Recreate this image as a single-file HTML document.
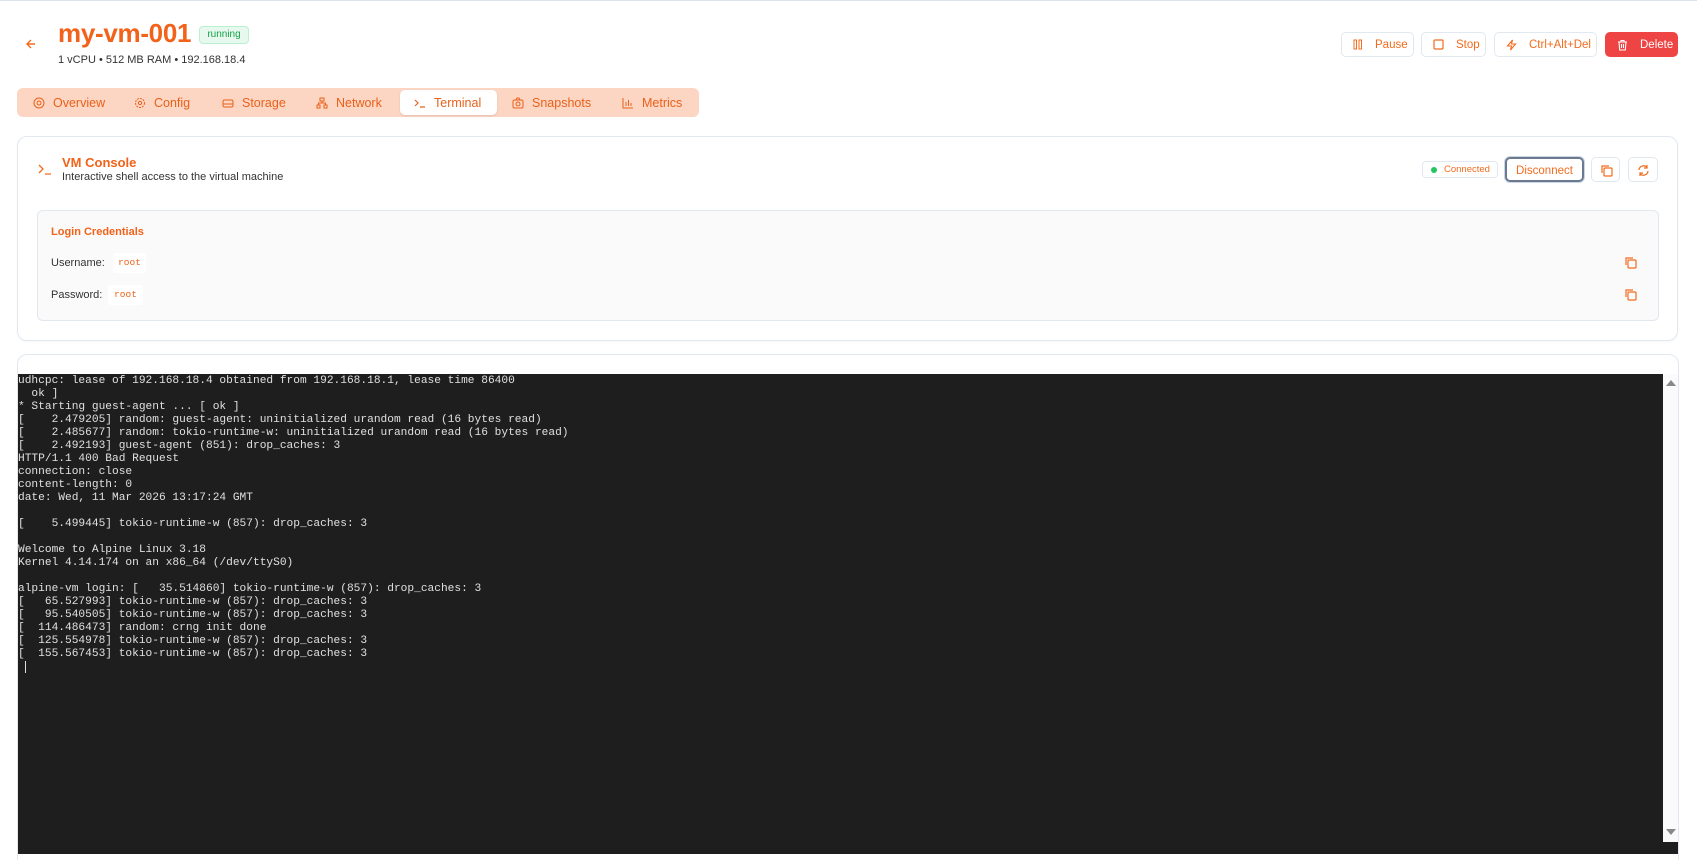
<!DOCTYPE html>
<html style="width:1697px;height:860px;overflow:hidden"><head><meta charset="utf-8"><style>
*{box-sizing:border-box;margin:0;padding:0}
body{width:1697px;height:860px;background:#fff;font-family:"Liberation Sans",sans-serif;position:relative;overflow:hidden;color:#333}
.a{position:absolute}
.btn{position:absolute;height:25px;border:1px solid #e2e8f0;border-radius:5px;background:#fff;color:#f26b1d;font-size:11.5px;display:flex;align-items:center;gap:12px;padding-left:11px}
.tab{position:absolute;top:88px;height:29px;display:flex;align-items:center;gap:8px;color:#e8611a;font-size:12.5px}
svg{display:block}
.term{position:absolute;left:18px;top:374px;width:1645px;height:468px;background:#1e1e1e;color:#e0e0e0;font-family:"Liberation Mono",monospace;font-size:11.2px;line-height:13px;white-space:pre;padding-top:1px}
</style></head><body>
<div class="a" style="left:0;top:0;width:1697px;height:1px;background:#dde3ee"></div>
<svg class="a" style="left:25px;top:38px" width="12" height="12" viewBox="0 0 12 12" fill="none" stroke="#f26b1d" stroke-width="1.4"><path d="M10 6H2M6 2L2 6l4 4"/></svg>
<div class="a" style="left:58px;top:18px;font-size:26px;font-weight:bold;color:#f2621a;letter-spacing:-0.3px">my-vm-001</div>
<div class="a" style="left:199px;top:26px;width:50px;height:18px;border:1px solid #bbf0cf;background:#e7f9ee;border-radius:4px;color:#16a34a;font-size:10px;text-align:center;line-height:16px">running</div>
<div class="a" style="left:58px;top:54px;font-size:11px;color:#333">1 vCPU • 512 MB RAM • 192.168.18.4</div>

<div class="btn" style="left:1341px;top:32px;width:73px"><svg width="10" height="11"><rect x="1" y="1" width="2.5" height="9" fill="none" stroke="#f26b1d"/><rect x="6" y="1" width="2.5" height="9" fill="none" stroke="#f26b1d"/></svg>Pause</div>
<div class="btn" style="left:1421px;top:32px;width:65px"><svg width="11" height="11"><rect x="1" y="1" width="9" height="9" rx="1" fill="none" stroke="#f26b1d" stroke-width="1.2"/></svg>Stop</div>
<div class="btn" style="left:1494px;top:32px;width:103px"><svg width="11" height="12" viewBox="0 0 11 12"><path d="M6.5 1L1.5 7h4l-1 4 5-6h-4z" fill="none" stroke="#f26b1d" stroke-width="1.1"/></svg>Ctrl+Alt+Del</div>
<div class="btn" style="left:1605px;top:32px;width:73px;background:#ef4444;border-color:#ef4444;color:#fff"><svg width="11" height="12" viewBox="0 0 11 12" fill="none" stroke="#fff" stroke-width="1.1"><path d="M1 3h9M4 3V1.5h3V3M2 3l.7 8h5.6L9 3M4.5 5v4M6.5 5v4"/></svg>Delete</div>

<div class="a" style="left:17px;top:88px;width:682px;height:29px;background:#fdd5c3;border-radius:6px"></div>
<div class="a" style="left:400px;top:90px;width:97px;height:25px;background:#fff;border-radius:5px;box-shadow:0 1px 2px rgba(0,0,0,.1)"></div>
<div class="tab" style="left:33px"><svg width="12" height="12"><circle cx="6" cy="6" r="5" fill="none" stroke="#e8611a"/><circle cx="6" cy="6" r="2" fill="none" stroke="#e8611a"/></svg>Overview</div>
<div class="tab" style="left:134px"><svg width="12" height="12"><circle cx="6" cy="6" r="4.5" fill="none" stroke="#e8611a" stroke-dasharray="2 1"/><circle cx="6" cy="6" r="1.6" fill="none" stroke="#e8611a"/></svg>Config</div>
<div class="tab" style="left:222px"><svg width="12" height="12"><rect x="1" y="3" width="10" height="7" rx="1.5" fill="none" stroke="#e8611a"/><path d="M1 7h10" stroke="#e8611a"/></svg>Storage</div>
<div class="tab" style="left:316px"><svg width="12" height="12" fill="none" stroke="#e8611a"><rect x="4" y="1" width="4" height="3"/><rect x="1" y="8" width="3" height="3"/><rect x="8" y="8" width="3" height="3"/><path d="M6 4v2M2.5 8V6h7v2"/></svg>Network</div>
<div class="tab" style="left:414px"><svg width="12" height="12" fill="none" stroke="#e8611a" stroke-width="1.2"><path d="M1 3l3 3-3 3M6 10h5"/></svg>Terminal</div>
<div class="tab" style="left:512px"><svg width="12" height="12" fill="none" stroke="#e8611a"><rect x="1" y="3" width="10" height="8" rx="1.5"/><circle cx="6" cy="7" r="2"/><path d="M4 3l1-2h2l1 2"/></svg>Snapshots</div>
<div class="tab" style="left:622px"><svg width="12" height="12" fill="none" stroke="#e8611a"><path d="M1 1v10h10M4 9V5M6.5 9V3M9 9V6"/></svg>Metrics</div>

<div class="a" style="left:17px;top:136px;width:1661px;height:205px;border:1px solid #e2e8f0;border-radius:10px;box-shadow:0 1px 2px rgba(0,0,0,.04)"></div>
<svg class="a" style="left:38px;top:162px" width="14" height="14" fill="none" stroke="#f26b1d" stroke-width="1.3"><path d="M1 3l4 4-4 4M7 12h6"/></svg>
<div class="a" style="left:62px;top:155px;font-size:13px;font-weight:bold;color:#f2621a">VM Console</div>
<div class="a" style="left:62px;top:171px;font-size:11px;color:#333">Interactive shell access to the virtual machine</div>
<div class="a" style="left:1422px;top:161px;width:76px;height:17px;border:1px solid #e2e8f0;border-radius:4px;font-size:9.5px;color:#f26b1d;line-height:15px;padding-left:21px"><span class="a" style="left:8px;top:5px;width:6px;height:6px;border-radius:50%;background:#22c55e"></span>Connected</div>
<div class="a" style="left:1505px;top:157px;width:79px;height:25px;border:2px solid #6b7a90;border-radius:5px;font-size:11.5px;color:#f26b1d;display:flex;align-items:center;justify-content:center;padding-top:2px;box-shadow:0 0 0 1px #cbd5e1">Disconnect</div>
<div class="a" style="left:1591px;top:157px;width:29px;height:25px;border:1px solid #e2e8f0;border-radius:5px"><svg style="margin:6px 8px" width="13" height="13" fill="none" stroke="#f26b1d" stroke-width="1.2"><rect x="4" y="4" width="8" height="8" rx="1"/><path d="M2 9V2h7"/></svg></div>
<div class="a" style="left:1628px;top:157px;width:30px;height:25px;border:1px solid #e2e8f0;border-radius:5px"><svg style="margin:6px 8px" width="13" height="13" viewBox="0 0 13 13" fill="none" stroke="#f26b1d" stroke-width="1.2"><path d="M2 6a4.5 4.5 0 0 1 8-2.5M11 7a4.5 4.5 0 0 1-8 2.5M10 1v3H7M3 12V9h3"/></svg></div>

<div class="a" style="left:37px;top:210px;width:1622px;height:111px;border:1px solid #e2e8f0;border-radius:6px;background:#fafafa"></div>
<div class="a" style="left:51px;top:226px;font-size:11px;font-weight:bold;color:#f2621a">Login Credentials</div>
<div class="a" style="left:51px;top:257px;font-size:11px;color:#333">Username:</div>
<div class="a" style="left:113px;top:253px;width:33px;height:20px;background:#fff;border-radius:3px;font-family:'Liberation Mono',monospace;font-size:9.5px;color:#f2621a;text-align:center;line-height:20px">root</div>
<div class="a" style="left:51px;top:289px;font-size:11px;color:#333">Password:</div>
<div class="a" style="left:108px;top:285px;width:35px;height:20px;background:#fff;border-radius:3px;font-family:'Liberation Mono',monospace;font-size:9.5px;color:#f2621a;text-align:center;line-height:20px">root</div>
<svg class="a" style="left:1624px;top:256px" width="13" height="13" fill="none" stroke="#f26b1d" stroke-width="1.2"><rect x="4" y="4" width="8" height="8" rx="1"/><path d="M2 9V2h7"/></svg>
<svg class="a" style="left:1624px;top:288px" width="13" height="13" fill="none" stroke="#f26b1d" stroke-width="1.2"><rect x="4" y="4" width="8" height="8" rx="1"/><path d="M2 9V2h7"/></svg>

<div class="a" style="left:17px;top:354px;width:1662px;height:506px;border:1px solid #e2e8f0;border-bottom:none;border-radius:10px 10px 0 0"></div>
<div class="term">udhcpc: lease of 192.168.18.4 obtained from 192.168.18.1, lease time 86400
  ok ]
* Starting guest-agent ... [ ok ]
[    2.479205] random: guest-agent: uninitialized urandom read (16 bytes read)
[    2.485677] random: tokio-runtime-w: uninitialized urandom read (16 bytes read)
[    2.492193] guest-agent (851): drop_caches: 3
HTTP/1.1 400 Bad Request
connection: close
content-length: 0
date: Wed, 11 Mar 2026 13:17:24 GMT

[    5.499445] tokio-runtime-w (857): drop_caches: 3

Welcome to Alpine Linux 3.18
Kernel 4.14.174 on an x86_64 (/dev/ttyS0)

alpine-vm login: [   35.514860] tokio-runtime-w (857): drop_caches: 3
[   65.527993] tokio-runtime-w (857): drop_caches: 3
[   95.540505] tokio-runtime-w (857): drop_caches: 3
[  114.486473] random: crng init done
[  125.554978] tokio-runtime-w (857): drop_caches: 3
[  155.567453] tokio-runtime-w (857): drop_caches: 3
<span style="display:inline-block;width:1px;height:12px;background:#ddd;margin-left:7px"></span></div>
<div class="a" style="left:1663px;top:374px;width:15px;height:468px;background:#fafafa"></div>
<div class="a" style="left:1666px;top:380px;width:0;height:0;border-left:5px solid transparent;border-right:5px solid transparent;border-bottom:6px solid #888"></div>
<div class="a" style="left:1666px;top:829px;width:0;height:0;border-left:5px solid transparent;border-right:5px solid transparent;border-top:6px solid #888"></div>
<div class="a" style="left:18px;top:842px;width:1660px;height:12px;background:#1e1e1e"></div>
</body></html>
